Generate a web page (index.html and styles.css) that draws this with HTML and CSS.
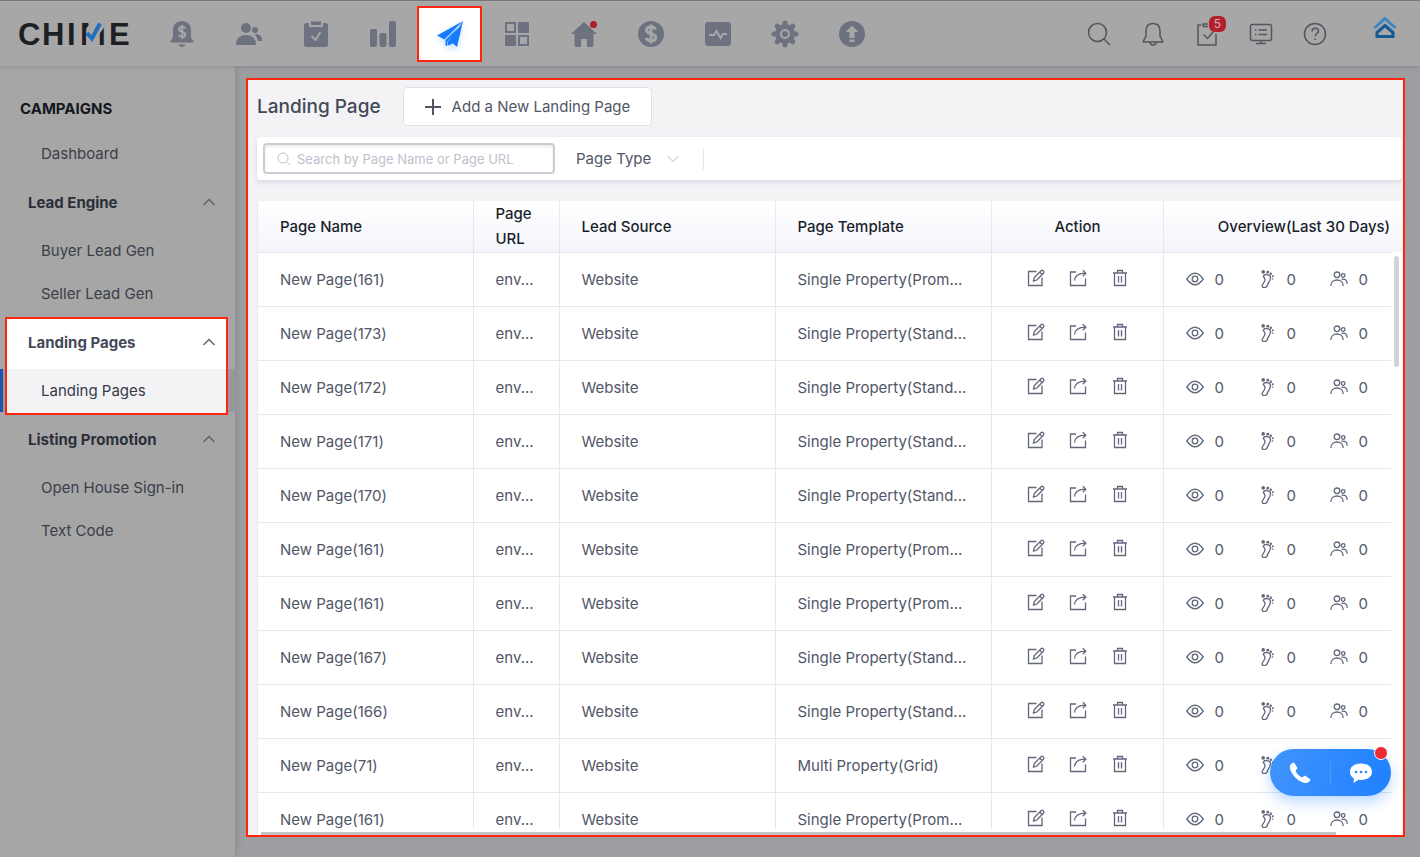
FILE: index.html
```html
<!DOCTYPE html>
<html lang="en">
<head>
  <meta charset="UTF-8" />
  <meta name="viewport" content="width=device-width, initial-scale=1.0"/>
  <title>Chime - Landing Pages</title>
  <link rel="stylesheet" href="styles.css">
</head>
<body>
  <!-- Shared icons -->
  <svg class="sprite" aria-hidden="true">
    <symbol id="i-chevron" viewBox="0 0 14 14"><path d="M1.5 10 7 4.5 12.5 10"/></symbol>
    <symbol id="i-edit" viewBox="0 0 18 18"><path d="M9.5 2.5H1.500v14h13.500V8.500M6.500 12l.8-3.500L14 1.700q1.200-.9 2.300.2t.1 2.300L9.800 11zM12.800 3.200l2.300 2.300"/></symbol>
    <symbol id="i-share" viewBox="0 0 18 18"><path d="M7 3H1.500v13.500h15V9.500M5.500 11.500C6 7 9 4.200 16.500 4.200M13.800 1.200l3 3-3 3"/></symbol>
    <symbol id="i-trash" viewBox="0 0 18 18"><path d="M2 4h14M6.500 4V1.500h5V4M3.500 4v12.500h11V4M7.500 7v6.500M10.500 7v6.500"/></symbol>
    <symbol id="i-eye" viewBox="0 0 18 18"><path d="M.8 9Q9-2.500 17.200 9 9 20.500.8 9z"/><circle cx="9" cy="9" r="2.800"/></symbol>
    <symbol id="i-foot" viewBox="0 0 18 18"><path d="M5.300 6.500C6.500 8 8 9 6.500 11.500S3 15.500 4.500 17s4.500.3 5-2 3-4 3-7.500S6 3.500 5.300 6.500z"/><g class="fill"><circle cx="5.200" cy="1.900" r="1.800"/><circle cx="9.800" cy="2.200" r="1.400"/><circle cx="12.800" cy="3.800" r="1.200"/><circle cx="14.800" cy="6.200" r="1"/><circle cx="14.500" cy="9" r=".8"/></g></symbol>
    <symbol id="i-people" viewBox="0 0 18 18"><circle cx="7" cy="4.800" r="2.800"/><circle cx="13.200" cy="5.500" r="1.800"/><path d="M.8 16c0-8 12.400-8 12.400 0M11.500 9.300c3.200-.9 5.700.8 5.700 4.400"/></symbol>
  </svg>

  <header class="topbar">
    <a class="logo" href="#" aria-label="Chime home">
      <svg width="112" height="34" viewBox="0 0 112 34">
        <text x="0 24 49 62 91" y="28">CHIME</text>
        <path class="check-gap" d="M68.500 11v18h12V18l6-8V4H74z"/>
        <path class="check" d="M69 16l5 5.500L82 6.500"/>
      </svg>
    </a>
    <nav class="main-nav" aria-label="Main">
      <a href="#" aria-label="Alerts"><svg viewBox="0 0 28 28"><path d="M14 1c-5.500 0-9 3.500-9 9v5c0 3-.7 4.500-2.500 6v1.500h23V21c-1.800-1.500-2.500-3-2.500-6v-5c0-5.500-3.500-9-9-9zM10.500 24.500h7c-1 3.200-6 3.200-7 0z"/><path class="cut" d="M17.300 8.500c-1-2.200-6.300-2.200-6.300.9 0 3.300 6.400 1.600 6.400 5 0 3.200-5.800 3-6.700.6M14.200 5v14"/></svg></a>
      <a href="#" aria-label="People"><svg viewBox="0 0 28 28"><circle cx="11" cy="8" r="5"/><path d="M1 24c0-12 20-12 20 0q0 1-1 1H2q-1 0-1-1z"/><circle cx="20" cy="10" r="3"/><path d="M19.500 14.500c5-1 8 1.500 7.500 6.500h-4.500c0-2.500-1-4.800-3-6.500z"/></svg></a>
      <a href="#" aria-label="Tasks"><svg viewBox="0 0 28 28"><path d="M4 3h3v4h14V3h3q2 0 2 2v20q0 2-2 2H4q-2 0-2-2V5q0-2 2-2zM9 1.500h10V5H9z"/><path class="cut" d="m9.500 16 4 4 5-8"/></svg></a>
      <a href="#" aria-label="Reporting"><svg viewBox="0 0 28 28"><rect x="1" y="9" width="7" height="18" rx="2"/><rect x="10.500" y="13" width="7" height="14" rx="2"/><rect x="20" y="1" width="7" height="26" rx="2"/></svg></a>
      <a class="active" href="#" aria-label="Campaigns"><svg viewBox="0 0 28 28"><path d="M27 1 1 15.500l7.500 4zM26 3.500 9.500 20v6l2-.5v-4zM27 1l-6 26-4-3.500-5 2v-4z"/></svg></a>
      <a href="#" aria-label="Apps"><svg viewBox="0 0 28 28"><rect x="15" y="2" width="11" height="11" rx="1"/><rect x="2" y="15" width="11" height="11" rx="1"/><path class="line" d="M3 3h9v9H3zM16 16h9v9h-9z"/></svg></a>
      <a href="#" aria-label="Website"><svg viewBox="0 0 28 28"><path d="M14 2 1 14h3.500v11q0 2 2 2H11v-8h6v8h4.500q2 0 2-2V14H27z"/><circle class="red" cx="23.500" cy="4.500" r="3.500"/></svg></a>
      <a href="#" aria-label="Transactions"><svg viewBox="0 0 28 28"><circle cx="14" cy="14" r="13"/><path class="cut thick" d="M18.500 9.500c-1-3.500-9-3.500-9 .8 0 4.700 9.200 2.300 9.200 7.200 0 4.300-8.500 4.200-9.500.4M14 4.500v19"/></svg></a>
      <a href="#" aria-label="Activity"><svg viewBox="0 0 28 28"><rect x="1" y="2" width="26" height="24" rx="3"/><path class="cut" d="M5 15h5l2.500-4 4 7 2.500-4h4"/></svg></a>
      <a href="#" aria-label="Settings"><svg viewBox="0 0 28 28"><circle cx="14" cy="14" r="10"/><path class="teeth" d="M14 3v22M3 14h22M6.200 6.200l15.600 15.600M21.800 6.200 6.200 21.800"/><circle class="cut" cx="14" cy="14" r="4"/></svg></a>
      <a href="#" aria-label="Upgrade"><svg viewBox="0 0 28 28"><circle cx="14" cy="14" r="13"/><path class="hole" d="m14 5.500 6.500 6.500h-4v6h-5v-6h-4zM11.500 19.500h5v2.500h-5z"/></svg></a>
    </nav>
    <div class="tools">
      <button aria-label="Search"><svg viewBox="0 0 24 24"><circle cx="10.500" cy="10.500" r="9"/><path d="m17 17 6 6"/></svg></button>
      <button aria-label="Notifications"><svg viewBox="0 0 24 24"><path d="M12 1.500c-5 0-7 3.500-7 7.500v5l-2.500 5v1h19v-1L19 14V9c0-4-2-7.500-7-7.500zM9 20c0 4 6 4 6 0"/></svg></button>
      <button aria-label="Tasks"><svg viewBox="0 0 24 24"><path d="M6 3H3v20h18V12M8 4.500V2h5M8 4.500h5M8.500 12.500l4 4 6-7"/></svg><span class="badge">5</span></button>
      <button aria-label="Console"><svg viewBox="0 0 24 24"><rect x="1.500" y="2.500" width="21" height="16" rx="2"/><path d="M6 8h1.500M9.500 8H18M6 12.500h1.500M9.500 12.500H18M12 19v2.500M7 21.500h10"/></svg></button>
      <button aria-label="Help"><svg viewBox="0 0 24 24"><circle cx="12" cy="12" r="10.500"/><path d="M9 9.500c0-4.500 6.500-4 6.500-.5 0 2.200-3.300 2.500-3.300 5.300M12.200 16.500V18"/></svg></button>
    </div>
    <a class="account" href="#" aria-label="Account"><svg viewBox="0 0 24 24"><path class="roof" d="M1.500 12 12 2.500 22.500 12"/><path class="house" d="m12 9.500 8 7v4H4v-4z"/></svg></a>
  </header>

  <div class="layout">
    <aside class="sidebar">
      <h2>CAMPAIGNS</h2>
      <a class="item" href="#">Dashboard</a>
      <div class="group">
        <button class="group-title">Lead Engine<svg><use href="#i-chevron"/></svg></button>
        <a class="item" href="#">Buyer Lead Gen</a>
        <a class="item" href="#">Seller Lead Gen</a>
      </div>
      <div class="group spotlight">
        <button class="group-title">Landing Pages<svg><use href="#i-chevron"/></svg></button>
        <a class="item" href="#"><span>Landing Pages</span></a>
      </div>
      <div class="group">
        <button class="group-title">Listing Promotion<svg><use href="#i-chevron"/></svg></button>
        <a class="item" href="#">Open House Sign-in</a>
        <a class="item" href="#">Text Code</a>
      </div>
    </aside>

    <main class="panel">
      <div class="panel-head">
        <h1>Landing Page</h1>
        <button class="add-btn"><svg viewBox="0 0 16 16"><path d="M8 0v16M0 8h16"/></svg>Add a New Landing Page</button>
      </div>

      <div class="filters">
        <label class="search">
          <svg viewBox="0 0 14 14"><circle cx="6" cy="6" r="5"/><path d="m10 10 3 3"/></svg>
          <input type="text" placeholder="Search by Page Name or Page URL" aria-label="Search by Page Name or Page URL">
        </label>
        <div class="type">
          <select aria-label="Page Type"><option>Page Type</option></select>
          <svg><use href="#i-chevron"/></svg>
        </div>
      </div>

      <div class="table-wrap">
        <table>
          <colgroup>
            <col class="c-name"><col class="c-url"><col class="c-source"><col class="c-template"><col class="c-action"><col class="c-overview">
          </colgroup>
          <thead>
            <tr>
              <th>Page Name</th>
              <th>Page URL</th>
              <th>Lead Source</th>
              <th>Page Template</th>
              <th class="center">Action</th>
              <th class="center">Overview(Last 30 Days)</th>
            </tr>
          </thead>
          <tbody id="rows"></tbody>
        </table>
        <div class="scroll-y"><span></span></div>
        <div class="scroll-x"><span></span></div>
      </div>
    </main>
  </div>

  <div class="contact">
    <button aria-label="Call"><svg viewBox="0 0 24 24"><path d="M2 5c-1 7 9 17 16 17 2 0 4-1.500 4.500-3.500L17 14.500l-3 2C11 15 9 13 7.500 10l2-3L6 1.500C4 2 2.300 3 2 5z"/></svg></button>
    <button aria-label="Chat"><svg viewBox="0 0 24 24"><path d="M12 2.500C5 2.500 1 6 1 11c0 3 1.500 5 4 6.500L4.500 22l5-3.200c8 .8 13.500-2.500 13.500-7.800 0-5-4-8.500-11-8.500z"/><g class="dots"><circle cx="7" cy="11" r="1.300"/><circle cx="12" cy="11" r="1.300"/><circle cx="17" cy="11" r="1.300"/></g></svg></button>
    <span class="dot"></span>
  </div>

  <script>
    const pages = [
      ['New Page(161)', 'Single Property(Prom...'],
      ['New Page(173)', 'Single Property(Stand...'],
      ['New Page(172)', 'Single Property(Stand...'],
      ['New Page(171)', 'Single Property(Stand...'],
      ['New Page(170)', 'Single Property(Stand...'],
      ['New Page(161)', 'Single Property(Prom...'],
      ['New Page(161)', 'Single Property(Prom...'],
      ['New Page(167)', 'Single Property(Stand...'],
      ['New Page(166)', 'Single Property(Stand...'],
      ['New Page(71)', 'Multi Property(Grid)'],
      ['New Page(161)', 'Single Property(Prom...']
    ];

    const icon = name => `<svg><use href="#i-${name}"/></svg>`;
    const action = (name, label) => `<button aria-label="${label}">${icon(name)}</button>`;
    const stat = name => `<span class="stat">${icon(name)}0</span>`;

    document.getElementById('rows').innerHTML = pages.map(([name, template]) => `
      <tr>
        <td>${name}</td>
        <td>env...</td>
        <td>Website</td>
        <td>${template}</td>
        <td><div class="actions">${action('edit', 'Edit')}${action('share', 'Share')}${action('trash', 'Delete')}</div></td>
        <td><div class="stats">${stat('eye')}${stat('foot')}${stat('people')}</div></td>
      </tr>`).join('');
  </script>
</body>
</html>
```
FILE: styles.css
```css
:root {
  --bar: #a7a7a7;
  --page: #9d9ea2;
  --nav-icon: #6e717f;
  --tool: #53565e;
  --red: #ff2610;
  --text: #515666;
  --line: #e6e7f0;
}
* { box-sizing: border-box; }
body {
  margin: 0;
  height: 100vh;
  display: flex;
  flex-direction: column;
  overflow: hidden;
  background: var(--page);
  color: var(--text);
  font-family: Inter, "Liberation Sans", sans-serif;
  font-size: 15px;
}
button {
  margin: 0;
  padding: 0;
  border: none;
  background: none;
  color: inherit;
  font: inherit;
  cursor: pointer;
}
a { color: inherit; text-decoration: none; }
svg { flex: none; fill: none; stroke: currentColor; }
.sprite { position: absolute; width: 0; height: 0; }
.fill { fill: currentColor; stroke: none; }

/* Top bar */
.topbar {
  flex: none;
  height: 66px;
  display: flex;
  align-items: center;
  padding: 0 23px 0 18px;
  background: var(--bar);
  border-top: 1px solid #777;
  box-shadow: 0 1px 5px rgba(0,0,0,0.14);
  z-index: 1;
}
.logo { display: flex; margin-right: 18px; }
.logo text {
  fill: #1d1f25;
  stroke: none;
  font-family: "Liberation Sans", Arial, sans-serif;
  font-size: 31px;
  font-weight: bold;
}
.check-gap { fill: var(--bar); stroke: none; }
.check { stroke: #1f6fbd; stroke-width: 4; }
.main-nav { display: flex; }
.main-nav a {
  width: 67px;
  height: 56px;
  display: flex;
  align-items: center;
  justify-content: center;
}
.main-nav svg { width: 28px; height: 28px; fill: var(--nav-icon); stroke: none; }
.main-nav .cut { fill: none; stroke: var(--bar); stroke-width: 2; }
.main-nav .thick { stroke-width: 3; }
.main-nav .line { fill: none; stroke: var(--nav-icon); stroke-width: 2; }
.main-nav .teeth { stroke: var(--nav-icon); stroke-width: 5; stroke-linecap: round; }
.main-nav .hole { fill: var(--bar); }
.main-nav .red { fill: #ae1f29; }
.main-nav .active {
  width: 65px;
  margin: 0 1px;
  background: #fff;
  border: 2px solid var(--red);
}
.main-nav .active svg { fill: #167bff; filter: drop-shadow(0 3px 3px rgba(22,123,255,0.25)); }
.tools { display: flex; margin-left: auto; }
.tools button {
  position: relative;
  width: 54px;
  height: 40px;
  display: flex;
  align-items: center;
  justify-content: center;
  color: var(--tool);
}
.tools svg { width: 24px; height: 24px; stroke-width: 1.5; }
.badge {
  position: absolute;
  top: 2px;
  left: 29px;
  width: 17px;
  height: 16px;
  border-radius: 6px;
  background: #b51f2b;
  color: #c9b4b6;
  font-size: 12px;
  line-height: 16px;
}
.account { margin-left: 31px; padding-bottom: 11px; }
.account svg { display: block; width: 24px; height: 24px; }
.roof { stroke: #3b86c4; stroke-width: 3; }
.house { stroke: #135b94; stroke-width: 3; }

/* Sidebar */
.layout { flex: 1; min-height: 0; display: flex; }
.sidebar {
  flex: none;
  width: 235px;
  background: #a6a6a6;
  box-shadow: 0 0 8px rgba(0,0,0,0.15);
}
.sidebar h2 {
  margin: 0;
  padding: 31px 20px 11px;
  color: #15171f;
  font-size: 15px;
  font-weight: 700;
  line-height: 24px;
}
.item {
  display: block;
  padding-left: 41px;
  color: #3a3e49;
  line-height: 43px;
}
.group-title {
  width: 100%;
  height: 54px;
  display: flex;
  align-items: center;
  justify-content: space-between;
  padding: 0 19px 0 28px;
  color: #2a2f3a;
  font-weight: 700;
}
.group-title svg { width: 14px; height: 14px; color: #5c5f68; stroke-width: 1.3; }

/* Highlighted group, framed over the dimmed menu */
.spotlight { position: relative; }
.spotlight::before {
  content: "";
  position: absolute;
  inset: 2px 7px -3px 5px;
  background: linear-gradient(#fff 50px, #f3f3f6 50px);
  border: 2px solid var(--red);
}
.spotlight .group-title { position: relative; color: #434957; }
.spotlight .item {
  color: #363b49;
  background: #98999d;
  border-left: 3px solid #1a56ae;
  padding-left: 38px;
}
.spotlight .item span { position: relative; }

/* Panel */
.panel {
  flex: 1;
  min-width: 0;
  display: flex;
  flex-direction: column;
  margin: 12px 15px 20px 11px;
  padding: 7px 1px 0 9px;
  background: #f3f3f6;
  border: 2px solid var(--red);
  overflow: hidden;
}
.panel-head { display: flex; align-items: center; gap: 22px; }
.panel-head h1 {
  margin: 0;
  color: #434957;
  font-size: 19px;
  font-weight: 500;
  line-height: 38px;
}
.add-btn {
  height: 39px;
  display: flex;
  align-items: center;
  gap: 11px;
  padding: 0 21px;
  background: #fff;
  border: 1px solid #dfe0e8;
  border-radius: 4px;
}
.add-btn svg { width: 16px; height: 16px; stroke-width: 2; }
.filters {
  display: flex;
  align-items: center;
  height: 43px;
  margin-top: 11px;
  padding: 0 6px;
  background: #fff;
  border-radius: 4px;
  box-shadow: 0 2px 5px rgba(40,45,90,0.14);
}
.search {
  width: 292px;
  height: 31px;
  display: flex;
  align-items: center;
  gap: 6px;
  padding: 0 12px;
  border: 2px solid #cbccd6;
  border-radius: 4px;
  box-shadow: inset 0 2px 3px rgba(0,0,0,0.08);
}
.search svg { width: 14px; height: 14px; color: #bfc1cc; }
.search input {
  flex: 1;
  min-width: 0;
  padding: 0;
  border: none;
  outline: none;
  background: none;
  font: inherit;
  font-size: 13px;
}
.search input::placeholder { color: #bfc1cc; }
.type {
  display: flex;
  align-items: center;
  gap: 14px;
  height: 22px;
  padding: 0 23px 0 21px;
  border-right: 1px solid #e6e7ec;
}
.type select {
  appearance: none;
  padding: 0;
  border: none;
  background: none;
  color: inherit;
  font: inherit;
}
.type svg { width: 14px; height: 14px; color: #b6b8c4; transform: rotate(180deg); }

/* Table */
.table-wrap {
  position: relative;
  flex: 1;
  min-height: 0;
  margin-top: 21px;
  overflow: hidden;
  background: #fff;
  border-left: 1px solid var(--line);
}
table {
  width: 100%;
  min-width: 1186px;
  table-layout: fixed;
  border-collapse: collapse;
}
.c-name { width: 215px; }
.c-url { width: 86px; }
.c-source, .c-template { width: 216px; }
.c-action { width: 172px; }
.c-overview { width: 281px; }
th, td {
  padding: 0 21px 0 22px;
  border-right: 1px solid var(--line);
  border-bottom: 1px solid var(--line);
  text-align: left;
}
th {
  height: 51px;
  background: linear-gradient(#fff, #f4f5fb);
  color: #1b1f2d;
  font-weight: 500;
  line-height: 25px;
}
th.center { text-align: center; }
td { height: 54px; white-space: nowrap; }
.actions { display: flex; justify-content: center; gap: 24px; padding-bottom: 3px; }
.actions button { display: flex; }
.actions svg, .stats svg { width: 18px; height: 18px; color: #62677a; stroke-width: 1.3; }
.stats { display: flex; }
.stat { width: 72px; display: flex; align-items: center; gap: 11px; }
.scroll-y {
  position: absolute;
  top: 51px;
  right: 0;
  bottom: 0;
  width: 11px;
  padding: 4px 3px 0;
  background: #fff;
}
.scroll-y span {
  display: block;
  height: 111px;
  border-radius: 3px;
  background: #d3d3d3;
}
.scroll-x {
  position: absolute;
  left: 0;
  right: 0;
  bottom: 0;
  height: 6px;
  padding: 3px 66px 0 3px;
  background: #fff;
}
.scroll-x span { display: block; height: 3px; background: #c4c4c6; }

/* Call / chat */
.contact {
  position: fixed;
  right: 29px;
  bottom: 61px;
  width: 121px;
  height: 47px;
  display: flex;
  align-items: center;
  border-radius: 24px;
  background: linear-gradient(100deg, #4194fc, #1f80ff);
  box-shadow: 0 6px 14px rgba(31,128,255,0.3);
  color: #fff;
  z-index: 2;
}
.contact button {
  flex: 1;
  height: 22px;
  display: flex;
  align-items: center;
  justify-content: center;
}
.contact button + button { border-left: 1px solid #4d9bff; }
.contact svg { width: 24px; height: 24px; fill: #fff; stroke: none; }
.contact .dots { fill: #2a86ff; }
.dot {
  position: absolute;
  top: -3px;
  right: 3px;
  width: 14px;
  height: 14px;
  border: 1px solid #fff;
  border-radius: 50%;
  background: #ee2a32;
}
```
